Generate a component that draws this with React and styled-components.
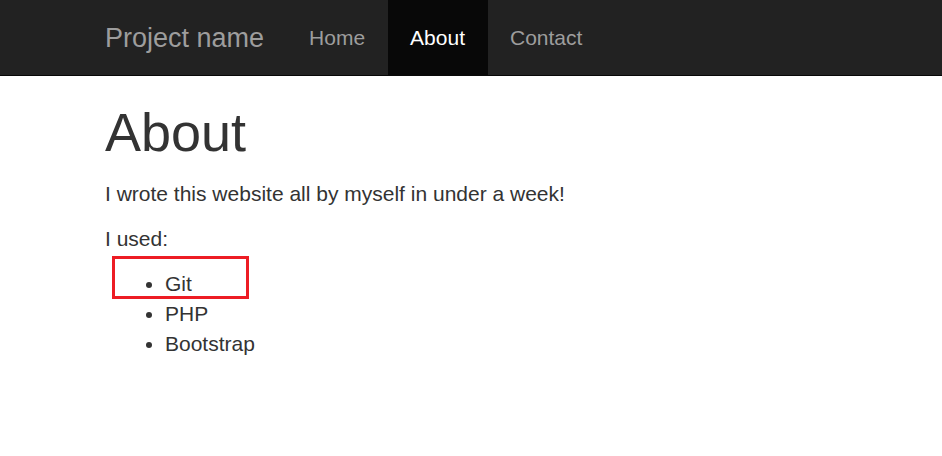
import React from 'react'
import styled, { createGlobalStyle } from 'styled-components'

const GlobalStyle = createGlobalStyle`
    html, body {
        margin: 0;
        padding: 0;
        background: #fff;
    }

    body {
        font-family: "Liberation Sans", Arial, Helvetica, sans-serif;
        font-size: 21px;
        line-height: 30px;
        color: #333;
    }
`

const Navbar = styled.nav`
    background-color: #222;
    border-bottom: 1px solid #080808;
    height: 75px;
`

const NavContainer = styled.div`
    display: flex;
    align-items: stretch;
    height: 100%;
    padding-left: 82.5px;
`

const Brand = styled.a`
    color: #9d9d9d;
    font-size: 27px;
    line-height: 30px;
    padding: 22.5px;
    text-decoration: none;
`

const NavList = styled.ul`
    display: flex;
    list-style: none;
    margin: 0;
    padding: 0;
`

const NavLink = styled.a`
    display: block;
    padding: 22.5px;
    line-height: 30px;
    font-size: 21px;
    text-decoration: none;
    color: ${({ $active }) => ($active ? '#fff' : '#9d9d9d')};
    background-color: ${({ $active }) => ($active ? '#080808' : 'transparent')};
`

const Container = styled.main`
    padding: 0 22.5px 0 105px;
`

const Title = styled.h1`
    font-size: 54px;
    font-weight: 500;
    line-height: 1.1;
    margin: 27px 0 17px;
`

const Paragraph = styled.p`
    margin: 0 0 15px;
`

const List = styled.ul`
    margin: 0 0 15px;
    padding-left: 60px;
`

const Item = styled.li`
    position: relative;
`

const Highlight = styled.span`
    position: absolute;
    left: -53px;
    top: -13px;
    width: 137px;
    height: 43px;
    box-sizing: border-box;
    border: 3px solid #ed1c24;
    pointer-events: none;
`

const links = [
    { label: 'Home' },
    { label: 'About', active: true },
    { label: 'Contact' },
]

const tools = ['Git', 'PHP', 'Bootstrap']

const App = () => {
    return (
        <>
            <GlobalStyle />

            <Navbar>
                <NavContainer>
                    <Brand href="#">Project name</Brand>
                    <NavList>
                        {links.map((link) => (
                            <li key={link.label}>
                                <NavLink href="#" $active={link.active}>{link.label}</NavLink>
                            </li>
                        ))}
                    </NavList>
                </NavContainer>
            </Navbar>

            <Container>
                <Title>About</Title>
                <Paragraph>I wrote this website all by myself in under a week!</Paragraph>
                <Paragraph>I used:</Paragraph>
                <List>
                    {tools.map((tool, index) => (
                        <Item key={tool}>
                            {index === 0 && <Highlight />}
                            {tool}
                        </Item>
                    ))}
                </List>
            </Container>
        </>
    )
}

export default App
